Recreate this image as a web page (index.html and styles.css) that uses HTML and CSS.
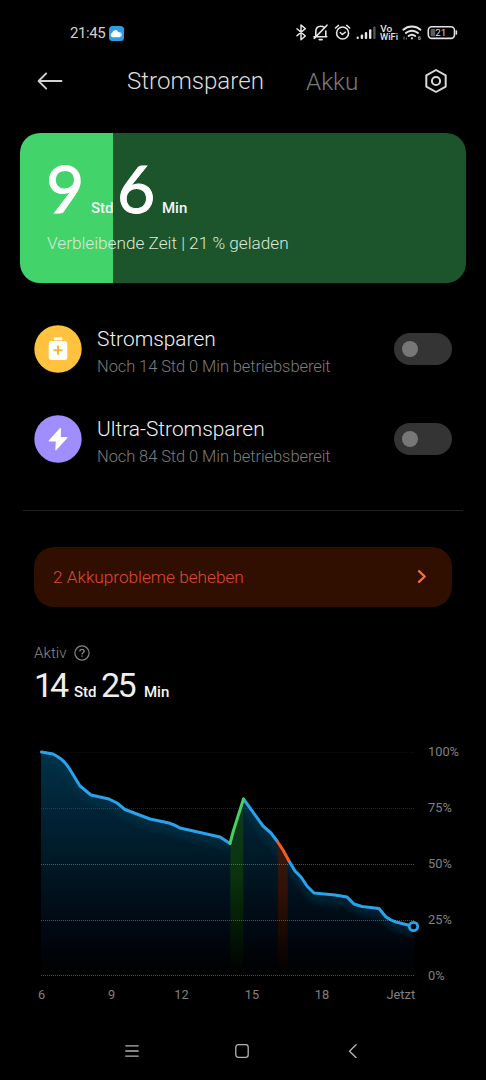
FILE: index.html
```html
<!DOCTYPE html>
<html lang="de">
<head>
<meta charset="utf-8">
<title>Stromsparen</title>
<link rel="stylesheet" href="styles.css">
</head>
<body>
<div class="statusbar">
  <span class="clock">21:45</span>
  <svg class="weather" width="15" height="15" viewBox="0 0 15 15"><rect width="15" height="15" rx="3.5" fill="#2d9fe0"/><circle cx="10.3" cy="8.6" r="2.7" fill="#a6dcf8"/><path d="M3.8 11.2a2.3 2.3 0 0 1-.5-4.5 3.1 3.1 0 0 1 5.9-.7 3 3 0 0 1 1.2 5.2z" fill="#fff"/></svg>
  <svg class="indicators" width="164" height="22" viewBox="294 22 164 22" fill="none" stroke="#e4e4e4" stroke-width="1.6" stroke-linecap="round" stroke-linejoin="round">
    <path d="M297 28.8l8.3 7.2-4.3 3.8V25l4.3 3.6-8.3 7.2" stroke-width="1.5"/>
    <path d="M314 36.8h12.8M315.8 36.3v-4.5c0-3.5 2.1-5.6 5-5.6 1.2 0 2.3.3 3.1 1M325.8 31v5M319.2 39.6h3M327 25.2l-12.7 13.2"/>
    <circle cx="342.6" cy="33" r="6"/><path d="M340.2 32.5l2.2 2 3-2.3M335.5 28l3-2.6M349.7 28l-3-2.6" stroke-width="1.5"/>
    <g stroke="none" fill="#e4e4e4"><rect x="356.6" y="36.5" width="2.2" height="2.5" rx="1"/><rect x="360.7" y="34.5" width="2.4" height="4.5" rx="1"/><rect x="364.8" y="32" width="2.4" height="7" rx="1"/><rect x="369" y="29.3" width="2.4" height="9.7" rx="1"/><rect x="373.2" y="26.5" width="2.4" height="12.5" rx="1" fill="#555"/></g>
    <g stroke="none" fill="#e4e4e4" class="vowifi"><text x="380.3" y="31.6" textLength="12" lengthAdjust="spacingAndGlyphs">Vo</text><text x="380" y="40" textLength="18" lengthAdjust="spacingAndGlyphs">WiFi</text></g>
    <path d="M403.3 29.7a13.2 13.2 0 0 1 17.2 0M405.8 33a9.3 9.3 0 0 1 12.2 0M408.6 36a5.2 5.2 0 0 1 6.6 0" stroke-width="1.9"/>
    <circle cx="411.9" cy="38.3" r="1.1" fill="#e4e4e4" stroke="none"/>
    <path d="M404 37v2.2M406.4 38v1.2" stroke-width=".8" stroke="#999"/>
    <text x="417.8" y="39.8" class="wifi-gen" stroke="none">6</text>
    <rect x="428.3" y="26.7" width="26.2" height="11.7" rx="3.6" stroke-width="1.6"/>
    <path d="M456.4 31v3" stroke-width="1.5"/>
    <rect x="430.6" y="29" width="4.6" height="7.2" rx="1" fill="#5c5c5c" stroke="none"/>
    <text x="435.3" y="36.4" class="charge" stroke="none">21</text>
  </svg>
</div>

<header class="header">
  <svg class="back" width="26" height="20" viewBox="0 0 26 20" fill="none" stroke="#d2d2d2" stroke-width="1.9" stroke-linecap="round" stroke-linejoin="round"><path d="M24.5 10H1.8M9.2 2.4L1.6 10l7.6 7.6"/></svg>
  <span class="tab tab-active">Stromsparen</span>
  <span class="tab">Akku</span>
  <svg class="settings" width="24" height="26" viewBox="0 0 24 26" fill="none" stroke="#d8d8d8" stroke-width="2" stroke-linejoin="round"><path d="M12 2l9.7 5.4v11.2L12 24l-9.7-5.4V7.4z"/><circle cx="12" cy="13" r="4.1"/></svg>
</header>

<section class="battery">
  <div class="time"><span class="num">9</span><span class="unit">Std</span><span class="num num-min">6</span><span class="unit unit-min">Min</span></div>
  <div class="caption">Verbleibende Zeit | 21 % geladen</div>
</section>

<section class="modes">
  <div class="mode">
    <svg width="48" height="48" viewBox="0 0 48 48"><circle cx="24" cy="24" r="23.7" fill="#ffc23f"/><rect x="19.7" y="12.2" width="8.6" height="3" rx=".8" fill="#fff"/><rect x="14.7" y="16" width="18.6" height="19" rx="3" fill="#fff"/><path d="M24 20.7v9M19.5 25.2h9" stroke="#f6b932" stroke-width="2"/></svg>
    <div class="mode-text"><div class="mode-title">Stromsparen</div><div class="mode-sub">Noch 14 Std 0 Min betriebsbereit</div></div>
    <div class="switch"></div>
  </div>
  <div class="mode">
    <svg width="48" height="48" viewBox="0 0 48 48"><circle cx="24" cy="24" r="23.7" fill="#a08eff"/><path d="M25.8 13.3L15 25.2c-.6.7-.3 1.3.5 1.3h6.3l-.5 8.2c0 .9.6 1 1.1.4l10.7-11.9c.6-.7.3-1.3-.5-1.3h-5.8l.2-8.2c0-.9-.7-1-1.2-.4z" fill="#fff"/></svg>
    <div class="mode-text"><div class="mode-title">Ultra-Stromsparen</div><div class="mode-sub">Noch 84 Std 0 Min betriebsbereit</div></div>
    <div class="switch"></div>
  </div>
</section>

<div class="divider"></div>

<div class="alert">
  <span>2 Akkuprobleme beheben</span>
  <svg width="10" height="14" viewBox="0 0 10 14" fill="none" stroke="#ff6c32" stroke-width="2.3" stroke-linecap="round" stroke-linejoin="round"><path d="M2 1.2L7.7 6.5 2 11.8"/></svg>
</div>

<section class="active">
  <div class="active-label"><span>Aktiv</span>
    <svg width="16" height="16" viewBox="0 0 16 16" fill="none" stroke="#858585" stroke-width="1.2"><circle cx="8" cy="8" r="7.1"/><path d="M5.9 6.5c0-1.3.9-2.1 2.1-2.1s2.1.8 2.1 1.9c0 1.5-2 1.5-2 3.1M8.1 10.4v1.4" stroke-width="1.4"/></svg>
  </div>
  <div class="active-time"><span class="anum">14</span><span class="unit">Std</span><span class="anum anum-min">25</span><span class="unit aunit-min">Min</span></div>
</section>

<svg class="chart" width="486" height="280" viewBox="0 735 486 280">
  <defs>
    <linearGradient id="blue" gradientUnits="userSpaceOnUse" x1="0" y1="752" x2="0" y2="975"><stop offset="0" stop-color="#023049"/><stop offset=".5" stop-color="#001825"/><stop offset=".8" stop-color="#000811"/><stop offset="1" stop-color="#000"/></linearGradient>
    <linearGradient id="green" gradientUnits="userSpaceOnUse" x1="0" y1="799" x2="0" y2="975"><stop offset="0" stop-color="#0f3a20"/><stop offset=".45" stop-color="#09320d"/><stop offset="1" stop-color="#000"/></linearGradient>
    <linearGradient id="red" gradientUnits="userSpaceOnUse" x1="0" y1="841" x2="0" y2="975"><stop offset="0" stop-color="#361a14"/><stop offset=".4" stop-color="#301006"/><stop offset="1" stop-color="#000"/></linearGradient>
    <clipPath id="under"><path d="M41 752L53 754 61 759 69 768 80 786 91 795 109 799 117 803 125 809.5 150 819 169 823 180 828 220 837 230 843.5 233 832 243.5 799 263 826 271 833 277 841 283 850 289 861 295 871 301 877 307 886 314 893 335 895 347 897 354 904 362 906.5 379 908.5 386 917 396 922 408 925 414 926.5V975H41z"/></clipPath>
    <filter id="soft" x="-10%" y="-10%" width="120%" height="130%"><feGaussianBlur stdDeviation="2.5"/></filter>
  </defs>
  <g clip-path="url(#under)">
    <rect x="41" y="750" width="373" height="225" fill="url(#blue)"/>
    <path d="M41 757L61 764 80 791 91 800 109 804 125 814 150 824 180 833 220 842 230 848M243.5 804L263 831 277 846 301 882 314 898 347 902 362 911 379 913 396 927 414 931" fill="none" stroke="#06354b" stroke-opacity=".45" stroke-width="10" filter="url(#soft)"/>
    <rect x="230.3" y="795" width="13" height="180" fill="url(#green)"/>
    <rect x="277.7" y="838" width="10" height="137" fill="url(#red)"/>
  </g>
  <g stroke="#fff" stroke-width="1" stroke-dasharray="1 1"><path d="M41 752.5H415" stroke-opacity=".06"/><path d="M41 808.5H415" stroke-opacity=".14"/><path d="M41 864.5H415M41 920.5H415M41 975.5H415" stroke-opacity=".3"/></g>
  <g fill="none" stroke="#28a4ee" stroke-width="3" stroke-linejoin="round" stroke-linecap="round">
    <path d="M41.5 752L53 754Q57 756 61 759T69 768L80 786 91 795 109 799 117 803 125 809.5 150 819 169 823Q175 825 180 828L220 837 230 843.5"/>
    <path d="M243.5 799L263 826 271 833 277 841"/>
    <path d="M289 861L295 871 301 877 307 886 314 893 335 895 347 897 354 904 362 906.5 379 908.5 386 917Q391 920.5 396 922L408 925 412 926"/>
    <path d="M277 841L283 850 289 861" stroke="#f45b1d" stroke-linecap="butt"/>
    <path d="M230 843.5L233 832 243.5 799" stroke="#49ce64"/>
  </g>
  <circle cx="413.5" cy="926.5" r="4.2" fill="#000" stroke="#28a4ee" stroke-width="2.8"/>
  <g class="axis">
    <text x="428" y="756">100%</text><text x="428" y="812">75%</text><text x="428" y="868">50%</text><text x="428" y="923.5">25%</text><text x="428" y="979.5">0%</text>
    <g text-anchor="middle"><text x="41.5" y="999">6</text><text x="111.5" y="999">9</text><text x="181.5" y="999">12</text><text x="252" y="999">15</text><text x="322" y="999">18</text><text x="400.8" y="999">Jetzt</text></g>
  </g>
</svg>

<nav class="nav">
  <svg width="14" height="14" viewBox="0 0 14 14" stroke="#b4b4b4" stroke-width="1.3" stroke-linecap="round"><path d="M.8 1.8h12.4M.8 7h12.4M.8 12.2h12.4"/></svg>
  <svg width="14" height="14" viewBox="0 0 14 14" fill="none" stroke="#b4b4b4" stroke-width="1.3"><rect x=".8" y=".7" width="12.4" height="12.6" rx="2.6"/></svg>
  <svg width="10" height="14" viewBox="0 0 10 14" fill="none" stroke="#b4b4b4" stroke-width="1.4" stroke-linecap="round" stroke-linejoin="round"><path d="M8 .8L1.5 7.2 8 13.4"/></svg>
</nav>
</body>
</html>
```
FILE: styles.css
```css
* { box-sizing: border-box; }
body {
  margin: 0;
  width: 486px;
  height: 1080px;
  overflow: hidden;
  background: #000;
  color: #f2f2f2;
  font-family: Roboto, "Liberation Sans", sans-serif;
  font-weight: 300;
}
svg { display: block; flex: none; }
span, .caption, .mode-title, .mode-sub { white-space: nowrap; }

.statusbar {
  display: flex;
  align-items: center;
  height: 66px;
  padding-left: 70px;
}
.clock { width: 39px; font-size: 15px; font-weight: 400; letter-spacing: -0.4px; color: #d0d0d0; }
.indicators { margin-left: 170px; }
.vowifi { font: 500 9px Roboto, sans-serif; }
.wifi-gen { font: 700 5.5px Roboto, sans-serif; fill: #aaa; }
.charge { font: 400 9.8px Roboto, sans-serif; fill: #ddd; }

.header { display: flex; align-items: center; height: 30px; padding-left: 37px; }
.tab { width: 136px; margin-left: 42px; font-size: 24.3px; color: #7a7a7a; }
.tab-active { width: 137px; margin-left: 64px; font-size: 24.1px; color: #dcdcdc; }
.settings { margin-left: -18px; }

.battery {
  height: 150px;
  margin: 36.5px 20px 0;
  padding: 19px 27px 0;
  border-radius: 20px;
  background: linear-gradient(to right, #42d46a 93.5px, #1c552b 93.5px);
}
.time { display: flex; align-items: baseline; height: 79px; line-height: 72px; }
.num {
  width: 44px;
  margin-left: -1px;
  margin-right: 1px;
  font-family: Lato, sans-serif;
  font-weight: 400;
  font-size: 66px;
  color: #fff;
  -webkit-text-stroke: 1px #fff;
}
.unit { width: 27px; font-size: 15px; font-weight: 500; color: #f5f5f5; }
.unit-min { width: auto; }
.caption { font-size: 17.2px; line-height: 24px; color: #d9ead9; }

.modes { padding: 21.5px 34px 0; }
.mode { display: flex; align-items: center; height: 90px; }
.mode-text { width: 297px; margin-left: 15px; padding-top: 7px; }
.mode-title { font-size: 20.9px; line-height: 26px; color: #f2f2f2; }
.mode-sub { margin-top: 3px; font-size: 16.5px; line-height: 24px; letter-spacing: -0.09px; color: #7c7c7c; }
.switch {
  display: flex;
  align-items: center;
  width: 58px;
  height: 32px;
  padding-left: 8px;
  border-radius: 16px;
  background: #343434;
}
.switch::before { content: ""; width: 16px; height: 16px; border-radius: 50%; background: #777; }

.divider { height: 1px; margin: 25.5px 23px 0; background: #222; }

.alert {
  display: flex;
  align-items: center;
  justify-content: space-between;
  height: 60px;
  margin: 36px 34px 0;
  padding: 1px 25px 0 19px;
  border-radius: 20px;
  background: #300f00;
  color: #df4a35;
  font-size: 17.2px;
}

.active { height: 128px; padding: 36px 34px 0; }
.active-label { display: flex; align-items: center; height: 20px; font-size: 15.2px; color: #8a8a8a; }
.active-label svg { margin-left: 7px; }
.active-time { display: flex; align-items: baseline; height: 44px; line-height: 44px; }
.anum { width: 40px; font-size: 34px; font-weight: 400; letter-spacing: -3px; color: #eee; }
.anum-min { width: 43px; letter-spacing: -2.5px; }
.aunit-min { width: auto; }

.axis { font-size: 12.8px; font-weight: 400; fill: #808080; }

.nav { display: flex; align-items: center; height: 72px; padding-left: 125px; }
.nav svg + svg { margin-left: 96px; }
.nav svg:last-child { margin-left: 99px; }
```
